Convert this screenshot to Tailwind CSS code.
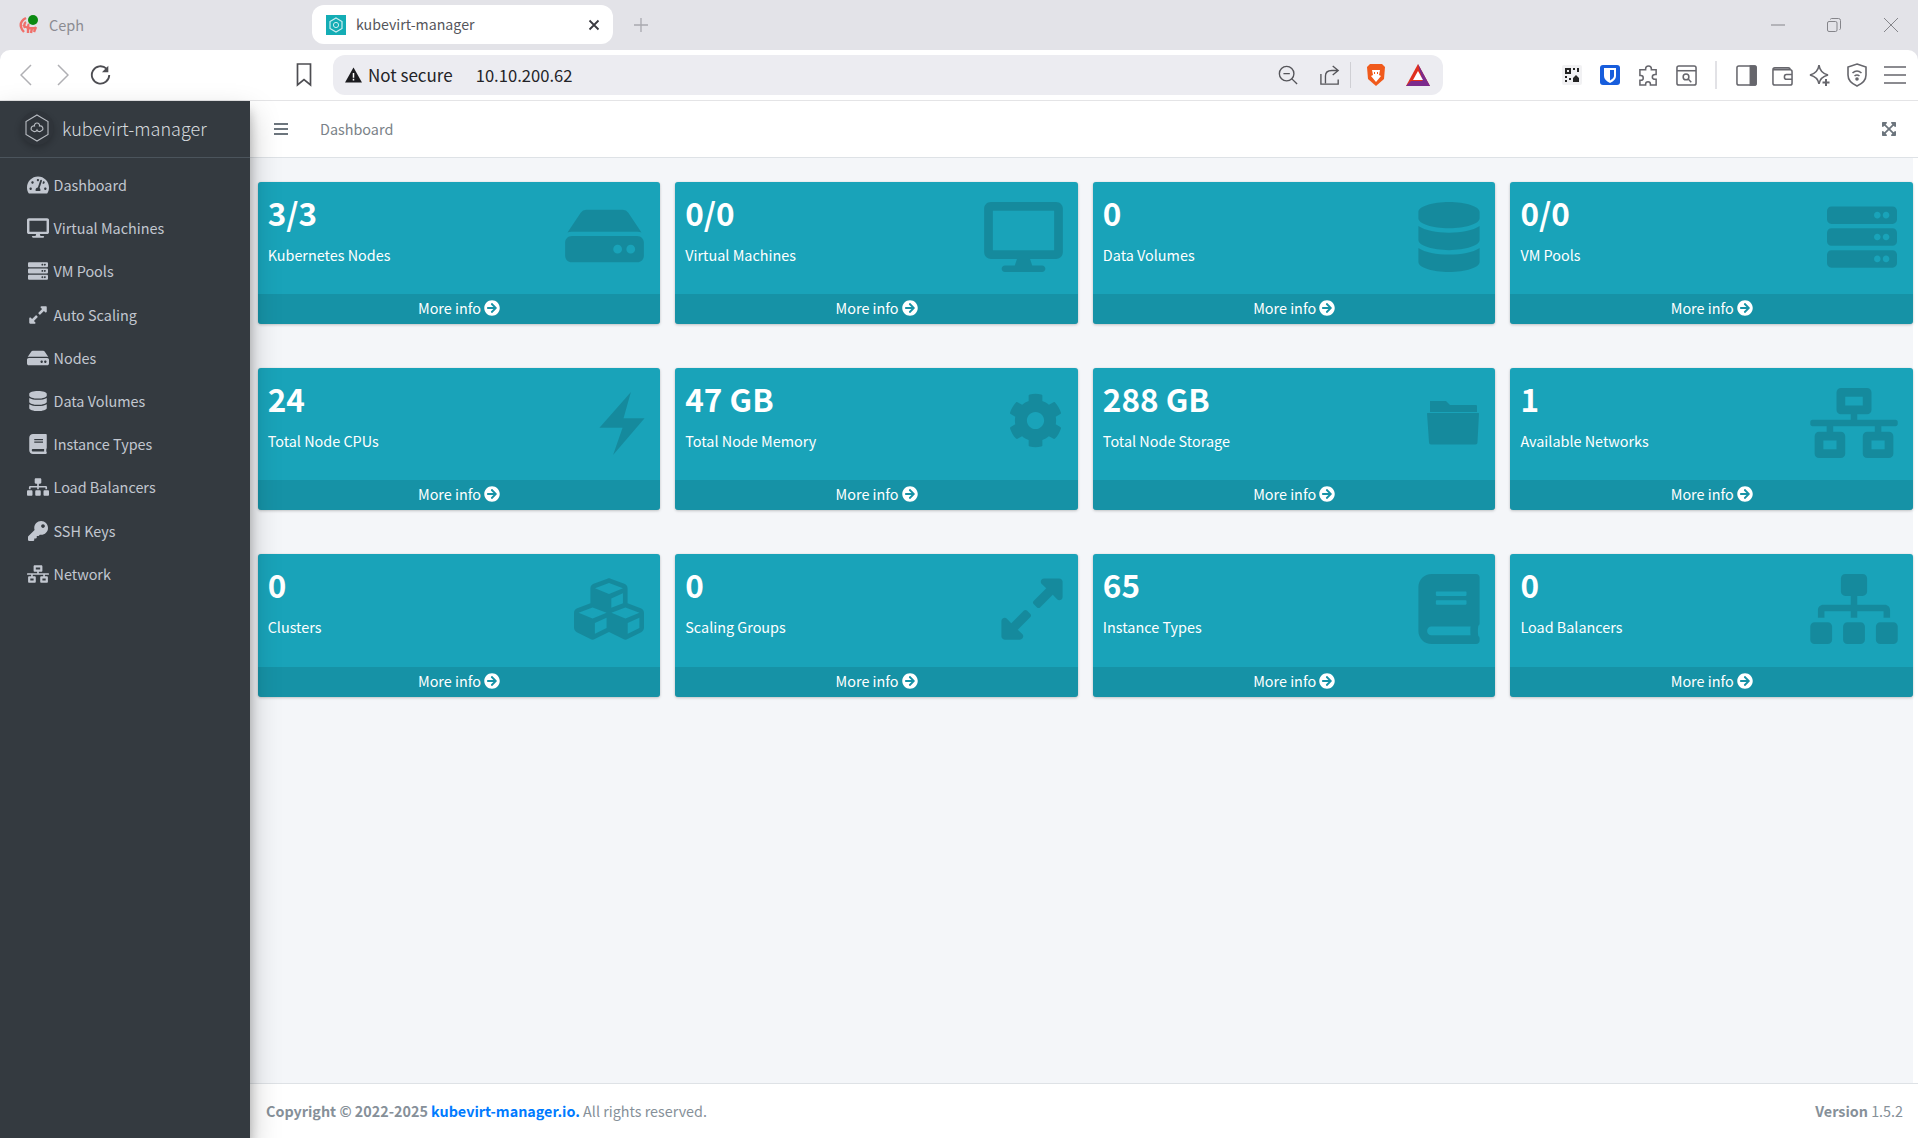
<!DOCTYPE html>
<html lang="en">
<head>
    <meta charset="UTF-8">
    <meta name="viewport" content="width=device-width, initial-scale=1.0">
    <title>kubevirt-manager</title>
    <script src="https://cdn.jsdelivr.net/npm/@tailwindcss/browser@4"></script>
</head>
<body class="h-[1138px] w-[1918px] overflow-hidden flex flex-col bg-white font-['Noto_Sans_CJK_SC','Noto_Sans',sans-serif] text-[14.4px] leading-6">

    <!-- icon set -->
    <svg class="hidden">
        <symbol id="i-hdd" viewBox="0 0 576 512"><path d="M576 304v96c0 26.51-21.49 48-48 48H48c-26.51 0-48-21.49-48-48v-96c0-26.51 21.49-48 48-48h480c26.51 0 48 21.49 48 48zm-48-80a79.557 79.557 0 0 1 30.777 6.165L462.25 85.374A48.003 48.003 0 0 0 422.311 64H153.689a48 48 0 0 0-39.938 21.374L17.223 230.165A79.557 79.557 0 0 1 48 224h480zm-48 96c-17.673 0-32 14.327-32 32s14.327 32 32 32 32-14.327 32-32-14.327-32-32-32zm-96 0c-17.673 0-32 14.327-32 32s14.327 32 32 32 32-14.327 32-32-14.327-32-32-32z"/></symbol>
        <symbol id="i-desktop" viewBox="0 0 576 512"><path d="M528 0H48C21.5 0 0 21.5 0 48v320c0 26.5 21.5 48 48 48h192l-16 48h-72c-13.3 0-24 10.7-24 24s10.7 24 24 24h272c13.3 0 24-10.7 24-24s-10.7-24-24-24h-72l-16-48h192c26.5 0 48-21.5 48-48V48c0-26.5-21.5-48-48-48zm-16 352H64V64h448v288z"/></symbol>
        <symbol id="i-database" viewBox="0 0 448 512"><path d="M448 73.143v45.714C448 159.143 347.667 192 224 192S0 159.143 0 118.857V73.143C0 32.857 100.333 0 224 0s224 32.857 224 73.143zM448 176v102.857C448 319.143 347.667 352 224 352S0 319.143 0 278.857V176c48.125 33.143 136.208 48.572 224 48.572S399.874 209.143 448 176zm0 160v102.857C448 479.143 347.667 512 224 512S0 479.143 0 438.857V336c48.125 33.143 136.208 48.572 224 48.572S399.874 369.143 448 336z"/></symbol>
        <symbol id="i-server" viewBox="0 0 512 512"><path d="M480 160H32c-17.673 0-32-14.327-32-32V64c0-17.673 14.327-32 32-32h448c17.673 0 32 14.327 32 32v64c0 17.673-14.327 32-32 32zm-48-88c-13.255 0-24 10.745-24 24s10.745 24 24 24 24-10.745 24-24-10.745-24-24-24zm-64 0c-13.255 0-24 10.745-24 24s10.745 24 24 24 24-10.745 24-24-10.745-24-24-24zm112 248H32c-17.673 0-32-14.327-32-32v-64c0-17.673 14.327-32 32-32h448c17.673 0 32 14.327 32 32v64c0 17.673-14.327 32-32 32zm-48-88c-13.255 0-24 10.745-24 24s10.745 24 24 24 24-10.745 24-24-10.745-24-24-24zm-64 0c-13.255 0-24 10.745-24 24s10.745 24 24 24 24-10.745 24-24-10.745-24-24-24zm112 248H32c-17.673 0-32-14.327-32-32v-64c0-17.673 14.327-32 32-32h448c17.673 0 32 14.327 32 32v64c0 17.673-14.327 32-32 32zm-48-88c-13.255 0-24 10.745-24 24s10.745 24 24 24 24-10.745 24-24-10.745-24-24-24zm-64 0c-13.255 0-24 10.745-24 24s10.745 24 24 24 24-10.745 24-24-10.745-24-24-24z"/></symbol>
        <symbol id="i-bolt" viewBox="0 0 43 60"><path d="M30 0 0 34h22L13 60 43 25H23z"/></symbol>
        <symbol id="i-cog" viewBox="0 0 512 512"><path d="M487.4 315.7l-42.6-24.6c4.3-23.2 4.3-47 0-70.2l42.6-24.6c4.9-2.8 7.1-8.6 5.5-14-11.1-35.6-30-67.8-54.7-94.6-3.8-4.1-10-5.1-14.8-2.3L380.8 110c-17.9-15.4-38.5-27.3-60.8-35.1V25.8c0-5.6-3.9-10.5-9.4-11.7-36.7-8.2-74.3-7.8-109.2 0-5.5 1.2-9.4 6.1-9.4 11.7V75c-22.2 7.9-42.8 19.8-60.8 35.1L88.7 85.5c-4.9-2.8-11-1.9-14.8 2.3-24.7 26.7-43.6 58.9-54.7 94.6-1.7 5.4.6 11.2 5.5 14L67.3 221c-4.3 23.2-4.3 47 0 70.2l-42.6 24.6c-4.9 2.8-7.1 8.6-5.5 14 11.1 35.6 30 67.8 54.7 94.6 3.8 4.1 10 5.1 14.8 2.3l42.6-24.6c17.9 15.4 38.5 27.3 60.8 35.1v49.2c0 5.6 3.9 10.5 9.4 11.7 36.7 8.2 74.3 7.8 109.2 0 5.5-1.2 9.4-6.1 9.4-11.7v-49.2c22.2-7.9 42.8-19.8 60.8-35.1l42.6 24.6c4.9 2.8 11 1.9 14.8-2.3 24.7-26.7 43.6-58.9 54.7-94.6 1.5-5.5-.7-11.3-5.6-14.1zM256 336c-44.1 0-80-35.9-80-80s35.9-80 80-80 80 35.9 80 80-35.9 80-80 80z"/></symbol>
        <symbol id="i-folder" viewBox="0 0 52 45"><path d="M3 1h16l4 4h26q1 0 1 1v6H3zM0 13.5q0-.5.5-.5h51q.5 0 .5.5l-1.5 29q0 2-2 2H4q-2 0-2-2z"/></symbol>
        <symbol id="i-network" viewBox="0 0 640 512"><path d="M640 264v-16c0-8.84-7.16-16-16-16H344v-40h72c17.67 0 32-14.33 32-32V32c0-17.67-14.33-32-32-32H224c-17.67 0-32 14.33-32 32v128c0 17.67 14.33 32 32 32h72v40H16c-8.84 0-16 7.16-16 16v16c0 8.84 7.16 16 16 16h104v40H64c-17.67 0-32 14.33-32 32v128c0 17.67 14.33 32 32 32h160c17.67 0 32-14.33 32-32V352c0-17.67-14.33-32-32-32h-56v-40h304v40h-56c-17.67 0-32 14.33-32 32v128c0 17.67 14.33 32 32 32h160c17.67 0 32-14.33 32-32V352c0-17.67-14.33-32-32-32h-56v-40h104c8.84 0 16-7.16 16-16zM256 128V64h128v64H256zm-64 320H96v-64h96v64zm352 0h-96v-64h96v64z"/></symbol>
        <symbol id="i-cubes" viewBox="0 0 512 512"><path d="M488.6 250.2L392 214V105.5c0-15-9.3-28.4-23.4-33.7l-100-37.5c-8.1-3.1-17.1-3.1-25.3 0l-100 37.5c-14.1 5.3-23.4 18.7-23.4 33.7V214l-96.6 36.2C9.3 255.5 0 268.9 0 283.9V394c0 13.6 7.7 26.1 19.9 32.2l100 50c10.1 5.1 22.1 5.1 32.2 0l103.9-52 103.9 52c10.1 5.1 22.1 5.1 32.2 0l100-50c12.2-6.1 19.9-18.6 19.9-32.2V283.9c0-15-9.3-28.4-23.4-33.7zM358 214.8l-85 31.9v-68.2l85-37v73.3zM154 104.1l102-38.2 102 38.2v.6l-102 41.4-102-41.4v-.6zm84 291.1l-85 42.5v-79.1l85-38.8v75.4zm0-112l-102 41.4-102-41.4v-.6l102-38.2 102 38.2v.6zm240 112l-85 42.5v-79.1l85-38.8v75.4zm0-112l-102 41.4-102-41.4v-.6l102-38.2 102 38.2v.6z"/></symbol>
        <symbol id="i-expand" viewBox="0 0 448 512"><path d="M212.686 315.314L120 408l32.922 31.029c15.12 15.12 4.412 40.971-16.97 40.971h-112C10.697 480 0 469.255 0 456V344c0-21.382 25.803-32.09 40.922-16.971L72 360l92.686-92.686c6.248-6.248 16.379-6.248 22.627 0l25.373 25.373c6.249 6.248 6.249 16.378 0 22.627zm22.628-118.628L328 104l-32.922-31.029C279.958 57.851 290.666 32 312.048 32h112C437.303 32 448 42.745 448 56v112c0 21.382-25.803 32.09-40.922 16.971L376 152l-92.686 92.686c-6.248 6.248-16.379 6.248-22.627 0l-25.373-25.373c-6.249-6.248-6.249-16.378 0-22.627z"/></symbol>
        <symbol id="i-book" viewBox="0 0 448 512"><path d="M448 360V24c0-13.3-10.7-24-24-24H96C43 0 0 43 0 96v320c0 53 43 96 96 96h328c13.3 0 24-10.7 24-24v-16c0-7.5-3.5-14.3-8.9-18.7-4.2-15.4-4.2-59.3 0-74.7 5.4-4.3 8.9-11.1 8.9-18.6zM128 134c0-3.3 2.7-6 6-6h212c3.3 0 6 2.7 6 6v20c0 3.3-2.7 6-6 6H134c-3.3 0-6-2.7-6-6v-20zm0 64c0-3.3 2.7-6 6-6h212c3.3 0 6 2.7 6 6v20c0 3.3-2.7 6-6 6H134c-3.3 0-6-2.7-6-6v-20zm253.4 250H96c-17.7 0-32-14.3-32-32 0-17.6 14.4-32 32-32h285.4c-1.9 17.1-1.9 46.9 0 64z"/></symbol>
        <symbol id="i-sitemap" viewBox="0 0 640 512"><path d="M128 352H32c-17.67 0-32 14.33-32 32v96c0 17.67 14.33 32 32 32h96c17.67 0 32-14.33 32-32v-96c0-17.67-14.33-32-32-32zm-24-80h192v48h48v-48h192v48h48v-57.59c0-21.17-17.23-38.41-38.41-38.41H344v-64h40c17.67 0 32-14.33 32-32V32c0-17.67-14.33-32-32-32H256c-17.67 0-32 14.33-32 32v96c0 17.67 14.33 32 32 32h40v64H94.41C73.23 224 56 241.23 56 262.41V320h48v-48zm264 80h-96c-17.67 0-32 14.33-32 32v96c0 17.67 14.33 32 32 32h96c17.67 0 32-14.33 32-32v-96c0-17.67-14.33-32-32-32zm240 0h-96c-17.67 0-32 14.33-32 32v96c0 17.67 14.33 32 32 32h96c17.67 0 32-14.33 32-32v-96c0-17.67-14.33-32-32-32z"/></symbol>
        <symbol id="i-arrow" viewBox="0 0 512 512"><path d="M256 8c137 0 248 111 248 248S393 504 256 504 8 393 8 256 119 8 256 8zm-28.9 143.6l75.5 72.4H120c-13.3 0-24 10.7-24 24v16c0 13.3 10.7 24 24 24h182.6l-75.5 72.4c-9.7 9.3-9.9 24.8-.4 34.3l11 10.9c9.4 9.4 24.6 9.4 33.9 0L404.3 273c9.4-9.4 9.4-24.6 0-33.9L271.6 106.3c-9.4-9.4-24.6-9.4-33.9 0l-11 10.9c-9.5 9.6-9.3 25.1.4 34.4z"/></symbol>
        <symbol id="i-gauge" viewBox="0 0 576 512"><path d="M288 32C128.94 32 0 160.94 0 320c0 52.8 14.25 102.26 39.06 144.8 5.61 9.62 16.3 15.2 27.44 15.2h443c11.14 0 21.83-5.58 27.44-15.2C561.75 422.26 576 372.8 576 320c0-159.06-128.94-288-288-288zm0 64c14.71 0 26.58 10.13 30.32 23.65-1.11 2.26-2.64 4.23-3.45 6.67l-9.22 27.67c-5.13 3.49-10.97 6.01-17.64 6.01-17.67 0-32-14.33-32-32S270.33 96 288 96zM96 384c-17.67 0-32-14.33-32-32s14.33-32 32-32 32 14.33 32 32-14.33 32-32 32zm48-160c-17.67 0-32-14.33-32-32s14.33-32 32-32 32 14.33 32 32-14.33 32-32 32zm246.77-72.41l-61.33 184C343.13 347.33 352 364.54 352 384c0 11.72-3.38 22.55-8.88 32H232.88c-5.5-9.45-8.88-20.28-8.88-32 0-33.94 26.5-61.43 59.9-63.59l61.34-184.01c4.17-12.56 17.73-19.45 30.36-15.17 12.57 4.19 19.35 17.79 15.17 30.36zm14.66 57.2l15.52-46.55c3.47-1.29 7.13-2.23 11.05-2.23 17.67 0 32 14.33 32 32s-14.33 32-32 32c-11.38-.01-20.89-6.28-26.57-15.22zM480 384c-17.67 0-32-14.33-32-32s14.33-32 32-32 32 14.33 32 32-14.33 32-32 32z"/></symbol>
        <symbol id="i-key" viewBox="0 0 512 512"><path d="M512 176.001C512 273.203 433.202 352 336 352c-11.22 0-22.19-1.062-32.827-3.069l-24.012 27.014A23.999 23.999 0 0 1 261.223 384H224v40c0 13.255-10.745 24-24 24h-40v40c0 13.255-10.745 24-24 24H24c-13.255 0-24-10.745-24-24v-78.059c0-6.365 2.529-12.47 7.029-16.971l161.802-161.802C163.108 213.814 160 195.271 160 176 160 78.798 238.797.001 335.999 0 433.488-.001 512 78.511 512 176.001zM336 128c0 26.51 21.49 48 48 48s48-21.49 48-48-21.49-48-48-48-48 21.49-48 48z"/></symbol>
        <symbol id="i-fullscreen" viewBox="0 0 448 512"><path d="M448 344v112a23.94 23.94 0 0 1-24 24H312c-21.39 0-32.09-25.9-17-41l36.2-36.2L224 295.6 116.77 402.9 153 439c15.09 15.1 4.39 41-17 41H24a23.94 23.94 0 0 1-24-24V344c0-21.4 25.89-32.1 41-17l36.19 36.2L184.46 256 77.18 148.7 41 185c-15.1 15.1-41 4.4-41-17V56a23.94 23.94 0 0 1 24-24h112c21.39 0 32.09 25.9 17 41l-36.2 36.2L224 216.4l107.23-107.3L295 73c-15.09-15.1-4.39-41 17-41h112a23.94 23.94 0 0 1 24 24v112c0 21.4-25.89 32.1-41 17l-36.19-36.2L263.54 256l107.28 107.3L407 327.1c15.1-15.2 41-4.5 41 16.9z"/></symbol>
    </svg>

    <!-- tab strip -->
    <div class="h-[50px] shrink-0 bg-[#e3e3e8] flex items-center relative">
        <div class="w-[312px] h-[39px] flex items-center pl-[19px] gap-[10px] text-[14.500px] text-[#8c8c92]">
            <span class="relative w-[20px] h-[20px]">
                <svg viewBox="0 0 20 20" class="w-[20px] h-[20px]" fill="none" stroke="#f0706a" stroke-width="2.400"><path d="M7 3C3 5 1 8 2 12c.5 2 2 4 3 5M7 7c-2 1-2 4-1 6M10 9c-1 1-1 3 0 4M4 10c2 2 6 4 13 3M9 13v5M13 13l-1 5M17 12l-2 5"/></svg>
                <span class="absolute left-[9px] top-0 w-[10px] h-[10px] rounded-full bg-[#0b8a12]"></span>
            </span>
            <span class="mb-px">Ceph</span>
        </div>
        <div class="w-[301px] h-[39px] -mt-px bg-white rounded-[12px] flex items-center pl-[14px] pr-[13px] text-[14.200px] text-[#55555b]">
            <svg viewBox="0 0 20 20" class="w-[20px] h-[20px] shrink-0 mr-[10px]"><rect width="20" height="20" fill="#14adb5"/><path d="M10 3l6 3.5v7L10 17l-6-3.500v-7z" fill="none" stroke="#cdeef0" stroke-width="1.200"/><circle cx="10" cy="10" r="2.600" fill="none" stroke="#cdeef0"/></svg>
            <span class="flex-1 mb-px">kubevirt-manager</span>
            <svg viewBox="0 0 12 12" class="w-[12px] h-[12px]" stroke="#3a3a40" stroke-width="1.800"><path d="M1.500 1.500l9 9M10.500 1.500l-9 9"/></svg>
        </div>
        <svg viewBox="0 0 14 14" class="w-[14px] h-[14px] ml-[21px]" stroke="#a9a9af" stroke-width="1.300"><path d="M7 0v14M0 7h14"/></svg>
        <div class="ml-auto flex items-center pr-[20px] gap-[42px]">
            <svg viewBox="0 0 14 14" class="w-[14px] h-[14px]" stroke="#85858a" stroke-width="1"><path d="M0 7h14"/></svg>
            <svg viewBox="0 0 14 14" class="w-[14px] h-[14px]" fill="none" stroke="#85858a" stroke-width="1"><rect x=".5" y="3.500" width="9.500" height="10" rx="1.500"/><path d="M3.500 1.500q0-1 1-1h7q2 0 2 2v8q0 1-1 1"/></svg>
            <svg viewBox="0 0 14 14" class="w-[14px] h-[14px] ml-[1px]" stroke="#85858a" stroke-width="1"><path d="M0 0l14 14M14 0L0 14"/></svg>
        </div>
    </div>

    <!-- toolbar -->
    <div class="h-[51px] shrink-0 bg-[#e3e3e8]">
        <div class="h-[51px] bg-white rounded-t-[10px] border-b border-[#e4e4e6] flex items-center">
            <div class="w-[333px] flex items-center">
                <svg viewBox="0 0 12 24" class="w-[12px] h-[24px] ml-[20px]" fill="none" stroke="#b0b0b4" stroke-width="1.500"><path d="M11 2L1 12l10 10"/></svg>
                <svg viewBox="0 0 12 24" class="w-[12px] h-[24px] ml-[25px]" fill="none" stroke="#b0b0b4" stroke-width="1.500"><path d="M1 2l10 10L1 22"/></svg>
                <svg viewBox="0 0 24 24" class="w-[22px] h-[22px] ml-[21px]" fill="none" stroke="#4d4d52" stroke-width="2"><path d="M21 12a9.500 9.500 0 1 1-3-7"/><path d="M20 2v7h-7" stroke-width="0" fill="#4d4d52"/></svg>
                <svg viewBox="0 0 16 24" class="w-[16px] h-[24px] ml-[184px]" fill="none" stroke="#4d4d52" stroke-width="1.700"><path d="M1.500 1h13v21L8 16.500 1.500 22z"/></svg>
            </div>
            <div class="w-[1110px] h-[40px] bg-[#ececf1] rounded-[12px] flex items-center pl-[12px] pr-[13px]">
                <svg viewBox="0 0 18 16" class="w-[17px] h-[16px] shrink-0"><path d="M9 0l9 16H0z" fill="#1b1b1f"/><path d="M8.200 6h1.600v5H8.200zM8.200 12h1.600v1.700H8.200z" fill="#fff"/></svg>
                <span class="ml-[6px] mb-px text-[17px] text-[#232327]">Not secure</span>
                <span class="ml-[23px] mb-px text-[16.600px] text-[#232327]">10.10.200.62</span>
                <div class="ml-auto flex items-center">
                    <svg viewBox="0 0 22 22" class="w-[20px] h-[20px]" fill="none" stroke="#55555a" stroke-width="1.500"><circle cx="9.500" cy="9.500" r="8"/><path d="M15 15l6 6M6 9.500h7"/></svg>
                    <svg viewBox="0 0 22 22" class="w-[20px] h-[20px] ml-[22px]" fill="none" stroke="#55555a" stroke-width="1.500"><path d="M6 20V12q0-6 7-6h6M14 1l6 5-6 5M1 10v11h19v-5" /></svg>
                    <span class="w-px h-[26px] bg-[#cfcfd4] ml-[10px]"></span>
                    <svg viewBox="0 0 20 24" class="w-[20px] h-[24px] ml-[15px]"><path d="M4 1h12l3 3-1 12-8 7-8-7L1 4z" fill="#f05a1c"/><path d="M6 7h8l-1 5 2 1-5 6-5-6 2-1z" fill="#fff"/><path d="M8 9h1v2H8zM11 9h1v2h-1z" fill="#f05a1c"/></svg>
                    <svg viewBox="0 0 24 22" class="w-[24px] h-[22px] ml-[20px]"><path d="M12 0l12 22H0z" fill="#e0301e"/><path d="M12 0l12 22-7-3z" fill="#7b2a8c"/><path d="M0 22l5-5h14l5 5z" fill="#7b2a8c"/><path d="M12 7l5 9H7z" fill="#fff"/></svg>
                </div>
            </div>
            <div class="flex items-center flex-1 pl-[119px]">
                <svg viewBox="0 0 20 20" class="w-[20px] h-[20px]"><rect width="20" height="20" rx="2" fill="#f1f1f3"/><path d="M3 3h6v6H3zM5 5v2h2V5zM11 3h2v2h-2zM15 3h2v4h-2zM3 11h2v2H3zM7 13h2v2H7zM3 15h2v2H3zM11 13l3-3 3 3v4h-6z" fill="#222"/></svg>
                <svg viewBox="0 0 20 20" class="w-[20px] h-[20px] ml-[18px]"><rect width="20" height="20" rx="3" fill="#175ddc"/><path d="M4 3h12v8q0 4-6 7-6-3-6-7z" fill="#fff"/><path d="M10 5h4v6q0 2-4 4.500z" fill="#175ddc"/></svg>
                <svg viewBox="0 0 22 22" class="w-[21px] h-[21px] ml-[18px]" fill="none" stroke="#66666c" stroke-width="1.600"><path d="M8 4q0-3 3-3t3 3v1h5v5h-1q-3 0-3 2.500T18 15h1v6h-6v-1q0-2.500-2.500-2.500T8 20v1H2v-5h1q2.500 0 2.500-2.500T3 11H2V5h6z"/></svg>
                <svg viewBox="0 0 22 22" class="w-[21px] h-[21px] ml-[17px]" fill="none" stroke="#66666c" stroke-width="1.600"><rect x="1" y="1" width="20" height="20" rx="2"/><path d="M1 6h20"/><circle cx="10.500" cy="12.500" r="3"/><path d="M13 15l3 3"/></svg>
                <span class="w-[2px] h-[28px] bg-[#e2e2e6] ml-[18px]"></span>
                <svg viewBox="0 0 22 22" class="w-[21px] h-[21px] ml-[19px]" fill="none" stroke="#66666c" stroke-width="1.600"><rect x="1" y="1" width="20" height="20" rx="2"/><path d="M15 1h5q1 0 1 1v18q0 1-1 1h-5z" fill="#66666c"/></svg>
                <svg viewBox="0 0 22 22" class="w-[21px] h-[21px] ml-[15px]" fill="none" stroke="#66666c" stroke-width="1.600"><path d="M3 3h14q2 0 2 2M1 5q0-2 2-2M1 5v14q0 2 2 2h16q2 0 2-2V7q0-2-2-2H1M21 10h-6q-2 0-2 2.500t2 2.500h6"/></svg>
                <svg viewBox="0 0 22 22" class="w-[22px] h-[22px] ml-[16px]" fill="none" stroke="#66666c" stroke-width="1.600"><path d="M10 1q1 8 9 10-8 2-9 9-1-7-9-9 8-2 9-10z"/><path d="M17 15v7M13.500 18.500h7" stroke-width="2"/></svg>
                <svg viewBox="0 0 22 24" class="w-[22px] h-[24px] ml-[15px]" fill="none" stroke="#66666c" stroke-width="1.600"><path d="M11 1l9 3v8q0 7-9 11-9-4-9-11V4z"/><path d="M6.500 10q4.500-4 9 0M8.500 13q2.500-2 5 0"/><circle cx="11" cy="16" r="1" fill="#66666c"/></svg>
                <svg viewBox="0 0 22 18" class="w-[22px] h-[18px] ml-[16px]" stroke="#66666c" stroke-width="1.600"><path d="M0 1h22M0 9h22M0 17h22"/></svg>
            </div>
        </div>
    </div>

    <!-- page -->
    <div class="flex-1 flex min-h-0">
        <aside class="w-[250px] shrink-0 bg-[#343a40] shadow-[0_14px_28px_rgba(0,0,0,.25),0_10px_10px_rgba(0,0,0,.22)] z-10 text-[#c2c7d0]">
            <div class="h-[57px] border-b border-[#4b545c] flex items-center pl-[20px] pb-[2px]">
                <span class="w-[34px] h-[34px] rounded-full bg-[#2f343a] shadow-[0_3px_6px_rgba(0,0,0,.2)] flex items-center justify-center mr-[8px]">
                    <svg viewBox="0 0 24 28" class="w-[24px] h-[28px]" fill="none" stroke="#b8bcc2" stroke-width="1.100"><path d="M12 1l11 6.500v13L12 27 1 20.500v-13z"/><path d="M12 9a2.500 2.500 0 0 1 2.500 3 2.500 2.500 0 0 1 1.500 5 2.500 2.500 0 0 1-4-1 2.500 2.500 0 0 1-4 1 2.500 2.500 0 0 1 1.500-5A2.500 2.500 0 0 1 12 9z"/></svg>
                </span>
                <span class="text-[18px] font-light leading-[30px] text-[#d7dadf]">kubevirt-manager</span>
            </div>
            <nav class="pt-[5.500px] flex flex-col">
                <a class="h-[43.200px] flex items-center"><svg class="w-[22px] h-[20px] ml-[26.500px] mr-[5px] fill-[#c2c7d0]"><use href="#i-gauge"/></svg>Dashboard</a>
                <a class="h-[43.200px] flex items-center"><svg class="w-[22px] h-[20px] ml-[26.500px] mr-[5px] fill-[#c2c7d0]"><use href="#i-desktop"/></svg>Virtual Machines</a>
                <a class="h-[43.200px] flex items-center"><svg class="w-[22px] h-[20px] ml-[26.500px] mr-[5px] fill-[#c2c7d0]"><use href="#i-server"/></svg>VM Pools</a>
                <a class="h-[43.200px] flex items-center"><svg class="w-[22px] h-[20px] ml-[26.500px] mr-[5px] fill-[#c2c7d0]"><use href="#i-expand"/></svg>Auto Scaling</a>
                <a class="h-[43.200px] flex items-center"><svg class="w-[22px] h-[20px] ml-[26.500px] mr-[5px] fill-[#c2c7d0]"><use href="#i-hdd"/></svg>Nodes</a>
                <a class="h-[43.200px] flex items-center"><svg class="w-[22px] h-[20px] ml-[26.500px] mr-[5px] fill-[#c2c7d0]"><use href="#i-database"/></svg>Data Volumes</a>
                <a class="h-[43.200px] flex items-center"><svg class="w-[22px] h-[20px] ml-[26.500px] mr-[5px] fill-[#c2c7d0]"><use href="#i-book"/></svg>Instance Types</a>
                <a class="h-[43.200px] flex items-center"><svg class="w-[22px] h-[20px] ml-[26.500px] mr-[5px] fill-[#c2c7d0]"><use href="#i-sitemap"/></svg>Load Balancers</a>
                <a class="h-[43.200px] flex items-center"><svg class="w-[22px] h-[20px] ml-[26.500px] mr-[5px] fill-[#c2c7d0]"><use href="#i-key"/></svg>SSH Keys</a>
                <a class="h-[43.200px] flex items-center"><svg class="w-[22px] h-[20px] ml-[26.500px] mr-[5px] fill-[#c2c7d0]"><use href="#i-network"/></svg>Network</a>
            </nav>
        </aside>

        <div class="flex-1 min-w-0 flex flex-col">
            <header class="h-[57px] shrink-0 bg-white border-b border-[#dee2e6] flex items-center pb-[1px]">
                <svg viewBox="0 0 14 12" class="w-[14px] h-[12px] ml-[24px]" stroke="#6c757d" stroke-width="1.800"><path d="M0 1h14M0 6h14M0 11h14"/></svg>
                <span class="ml-[32px] text-[#7a8288]">Dashboard</span>
                <svg class="w-[14px] h-[16px] ml-auto mr-[22px] fill-[#6c757d]"><use href="#i-fullscreen"/></svg>
            </header>

            <main class="flex-1 min-h-0 mr-[5px] bg-[#f4f6f9] pl-[7.700px] pt-[24px]">
                <div class="grid grid-cols-4 gap-x-[15px] gap-y-[44px]">

                    <div class="relative h-[142px] bg-[#19a3b9] rounded-[3px] shadow-[0_0_1px_rgba(0,0,0,.125),0_1px_3px_rgba(0,0,0,.2)] text-white flex flex-col overflow-hidden">
                        <div class="flex-1 px-[10px] pt-[9px]"><h3 class="text-[31.500px] font-bold leading-[42px] mb-[10px]">3/3</h3><p class="leading-6">Kubernetes Nodes</p></div>
                        <svg class="absolute right-[16px] top-[19px] w-[79px] h-[70px] fill-black/15"><use href="#i-hdd"/></svg>
                        <a class="h-[30px] pb-[3px] bg-black/10 flex items-center justify-center gap-[3px]">More info <svg class="w-[16px] h-[16px] fill-white"><use href="#i-arrow"/></svg></a>
                    </div>

                    <div class="relative h-[142px] bg-[#19a3b9] rounded-[3px] shadow-[0_0_1px_rgba(0,0,0,.125),0_1px_3px_rgba(0,0,0,.2)] text-white flex flex-col overflow-hidden">
                        <div class="flex-1 px-[10px] pt-[9px]"><h3 class="text-[31.500px] font-bold leading-[42px] mb-[10px]">0/0</h3><p class="leading-6">Virtual Machines</p></div>
                        <svg class="absolute right-[15px] top-[20px] w-[79px] h-[70px] fill-black/15"><use href="#i-desktop"/></svg>
                        <a class="h-[30px] pb-[3px] bg-black/10 flex items-center justify-center gap-[3px]">More info <svg class="w-[16px] h-[16px] fill-white"><use href="#i-arrow"/></svg></a>
                    </div>

                    <div class="relative h-[142px] bg-[#19a3b9] rounded-[3px] shadow-[0_0_1px_rgba(0,0,0,.125),0_1px_3px_rgba(0,0,0,.2)] text-white flex flex-col overflow-hidden">
                        <div class="flex-1 px-[10px] pt-[9px]"><h3 class="text-[31.500px] font-bold leading-[42px] mb-[10px]">0</h3><p class="leading-6">Data Volumes</p></div>
                        <svg class="absolute right-[15px] top-[20px] w-[62px] h-[70px] fill-black/15"><use href="#i-database"/></svg>
                        <a class="h-[30px] pb-[3px] bg-black/10 flex items-center justify-center gap-[3px]">More info <svg class="w-[16px] h-[16px] fill-white"><use href="#i-arrow"/></svg></a>
                    </div>

                    <div class="relative h-[142px] bg-[#19a3b9] rounded-[3px] shadow-[0_0_1px_rgba(0,0,0,.125),0_1px_3px_rgba(0,0,0,.2)] text-white flex flex-col overflow-hidden">
                        <div class="flex-1 px-[10px] pt-[9px]"><h3 class="text-[31.500px] font-bold leading-[42px] mb-[10px]">0/0</h3><p class="leading-6">VM Pools</p></div>
                        <svg class="absolute right-[16px] top-[20px] w-[70px] h-[70px] fill-black/15"><use href="#i-server"/></svg>
                        <a class="h-[30px] pb-[3px] bg-black/10 flex items-center justify-center gap-[3px]">More info <svg class="w-[16px] h-[16px] fill-white"><use href="#i-arrow"/></svg></a>
                    </div>

                    <div class="relative h-[142px] bg-[#19a3b9] rounded-[3px] shadow-[0_0_1px_rgba(0,0,0,.125),0_1px_3px_rgba(0,0,0,.2)] text-white flex flex-col overflow-hidden">
                        <div class="flex-1 px-[10px] pt-[9px]"><h3 class="text-[31.500px] font-bold leading-[42px] mb-[10px]">24</h3><p class="leading-6">Total Node CPUs</p></div>
                        <svg class="absolute right-[15px] top-[24px] w-[46px] h-[63px] fill-black/15"><use href="#i-bolt"/></svg>
                        <a class="h-[30px] pb-[3px] bg-black/10 flex items-center justify-center gap-[3px]">More info <svg class="w-[16px] h-[16px] fill-white"><use href="#i-arrow"/></svg></a>
                    </div>

                    <div class="relative h-[142px] bg-[#19a3b9] rounded-[3px] shadow-[0_0_1px_rgba(0,0,0,.125),0_1px_3px_rgba(0,0,0,.2)] text-white flex flex-col overflow-hidden">
                        <div class="flex-1 px-[10px] pt-[9px]"><h3 class="text-[31.500px] font-bold leading-[42px] mb-[10px]">47 GB</h3><p class="leading-6">Total Node Memory</p></div>
                        <svg class="absolute right-[15px] top-[25px] w-[55px] h-[55px] fill-black/15"><use href="#i-cog"/></svg>
                        <a class="h-[30px] pb-[3px] bg-black/10 flex items-center justify-center gap-[3px]">More info <svg class="w-[16px] h-[16px] fill-white"><use href="#i-arrow"/></svg></a>
                    </div>

                    <div class="relative h-[142px] bg-[#19a3b9] rounded-[3px] shadow-[0_0_1px_rgba(0,0,0,.125),0_1px_3px_rgba(0,0,0,.2)] text-white flex flex-col overflow-hidden">
                        <div class="flex-1 px-[10px] pt-[9px]"><h3 class="text-[31.500px] font-bold leading-[42px] mb-[10px]">288 GB</h3><p class="leading-6">Total Node Storage</p></div>
                        <svg class="absolute right-[16px] top-[32px] w-[52px] h-[45px] fill-black/15"><use href="#i-folder"/></svg>
                        <a class="h-[30px] pb-[3px] bg-black/10 flex items-center justify-center gap-[3px]">More info <svg class="w-[16px] h-[16px] fill-white"><use href="#i-arrow"/></svg></a>
                    </div>

                    <div class="relative h-[142px] bg-[#19a3b9] rounded-[3px] shadow-[0_0_1px_rgba(0,0,0,.125),0_1px_3px_rgba(0,0,0,.2)] text-white flex flex-col overflow-hidden">
                        <div class="flex-1 px-[10px] pt-[9px]"><h3 class="text-[31.500px] font-bold leading-[42px] mb-[10px]">1</h3><p class="leading-6">Available Networks</p></div>
                        <svg class="absolute right-[15px] top-[20px] w-[88px] h-[70px] fill-black/15"><use href="#i-network"/></svg>
                        <a class="h-[30px] pb-[3px] bg-black/10 flex items-center justify-center gap-[3px]">More info <svg class="w-[16px] h-[16px] fill-white"><use href="#i-arrow"/></svg></a>
                    </div>

                    <div class="relative h-[143px] bg-[#19a3b9] rounded-[3px] shadow-[0_0_1px_rgba(0,0,0,.125),0_1px_3px_rgba(0,0,0,.2)] text-white flex flex-col overflow-hidden">
                        <div class="flex-1 px-[10px] pt-[9px]"><h3 class="text-[31.500px] font-bold leading-[42px] mb-[10px]">0</h3><p class="leading-6">Clusters</p></div>
                        <svg class="absolute right-[16px] top-[20px] w-[70px] h-[70px] fill-black/15"><use href="#i-cubes"/></svg>
                        <a class="h-[30px] pb-[3px] bg-black/10 flex items-center justify-center gap-[3px]">More info <svg class="w-[16px] h-[16px] fill-white"><use href="#i-arrow"/></svg></a>
                    </div>

                    <div class="relative h-[143px] bg-[#19a3b9] rounded-[3px] shadow-[0_0_1px_rgba(0,0,0,.125),0_1px_3px_rgba(0,0,0,.2)] text-white flex flex-col overflow-hidden">
                        <div class="flex-1 px-[10px] pt-[9px]"><h3 class="text-[31.500px] font-bold leading-[42px] mb-[10px]">0</h3><p class="leading-6">Scaling Groups</p></div>
                        <svg class="absolute right-[15px] top-[20px] w-[62px] h-[70px] fill-black/15"><use href="#i-expand"/></svg>
                        <a class="h-[30px] pb-[3px] bg-black/10 flex items-center justify-center gap-[3px]">More info <svg class="w-[16px] h-[16px] fill-white"><use href="#i-arrow"/></svg></a>
                    </div>

                    <div class="relative h-[143px] bg-[#19a3b9] rounded-[3px] shadow-[0_0_1px_rgba(0,0,0,.125),0_1px_3px_rgba(0,0,0,.2)] text-white flex flex-col overflow-hidden">
                        <div class="flex-1 px-[10px] pt-[9px]"><h3 class="text-[31.500px] font-bold leading-[42px] mb-[10px]">65</h3><p class="leading-6">Instance Types</p></div>
                        <svg class="absolute right-[15px] top-[20px] w-[62px] h-[70px] fill-black/15"><use href="#i-book"/></svg>
                        <a class="h-[30px] pb-[3px] bg-black/10 flex items-center justify-center gap-[3px]">More info <svg class="w-[16px] h-[16px] fill-white"><use href="#i-arrow"/></svg></a>
                    </div>

                    <div class="relative h-[143px] bg-[#19a3b9] rounded-[3px] shadow-[0_0_1px_rgba(0,0,0,.125),0_1px_3px_rgba(0,0,0,.2)] text-white flex flex-col overflow-hidden">
                        <div class="flex-1 px-[10px] pt-[9px]"><h3 class="text-[31.500px] font-bold leading-[42px] mb-[10px]">0</h3><p class="leading-6">Load Balancers</p></div>
                        <svg class="absolute right-[15px] top-[20px] w-[88px] h-[70px] fill-black/15"><use href="#i-sitemap"/></svg>
                        <a class="h-[30px] pb-[3px] bg-black/10 flex items-center justify-center gap-[3px]">More info <svg class="w-[16px] h-[16px] fill-white"><use href="#i-arrow"/></svg></a>
                    </div>

                </div>
            </main>

            <footer class="h-[55px] shrink-0 bg-white border-t border-[#dee2e6] flex items-center justify-between pl-[16px] pr-[15px] text-[14.350px] text-[#869099]">
                <span><b class="font-bold">Copyright © 2022-2025 <a class="text-[#007bff]">kubevirt-manager.io.</a></b> All rights reserved.</span>
                <span><b class="font-bold">Version</b> 1.5.2</span>
            </footer>
        </div>
    </div>
</body>
</html>
